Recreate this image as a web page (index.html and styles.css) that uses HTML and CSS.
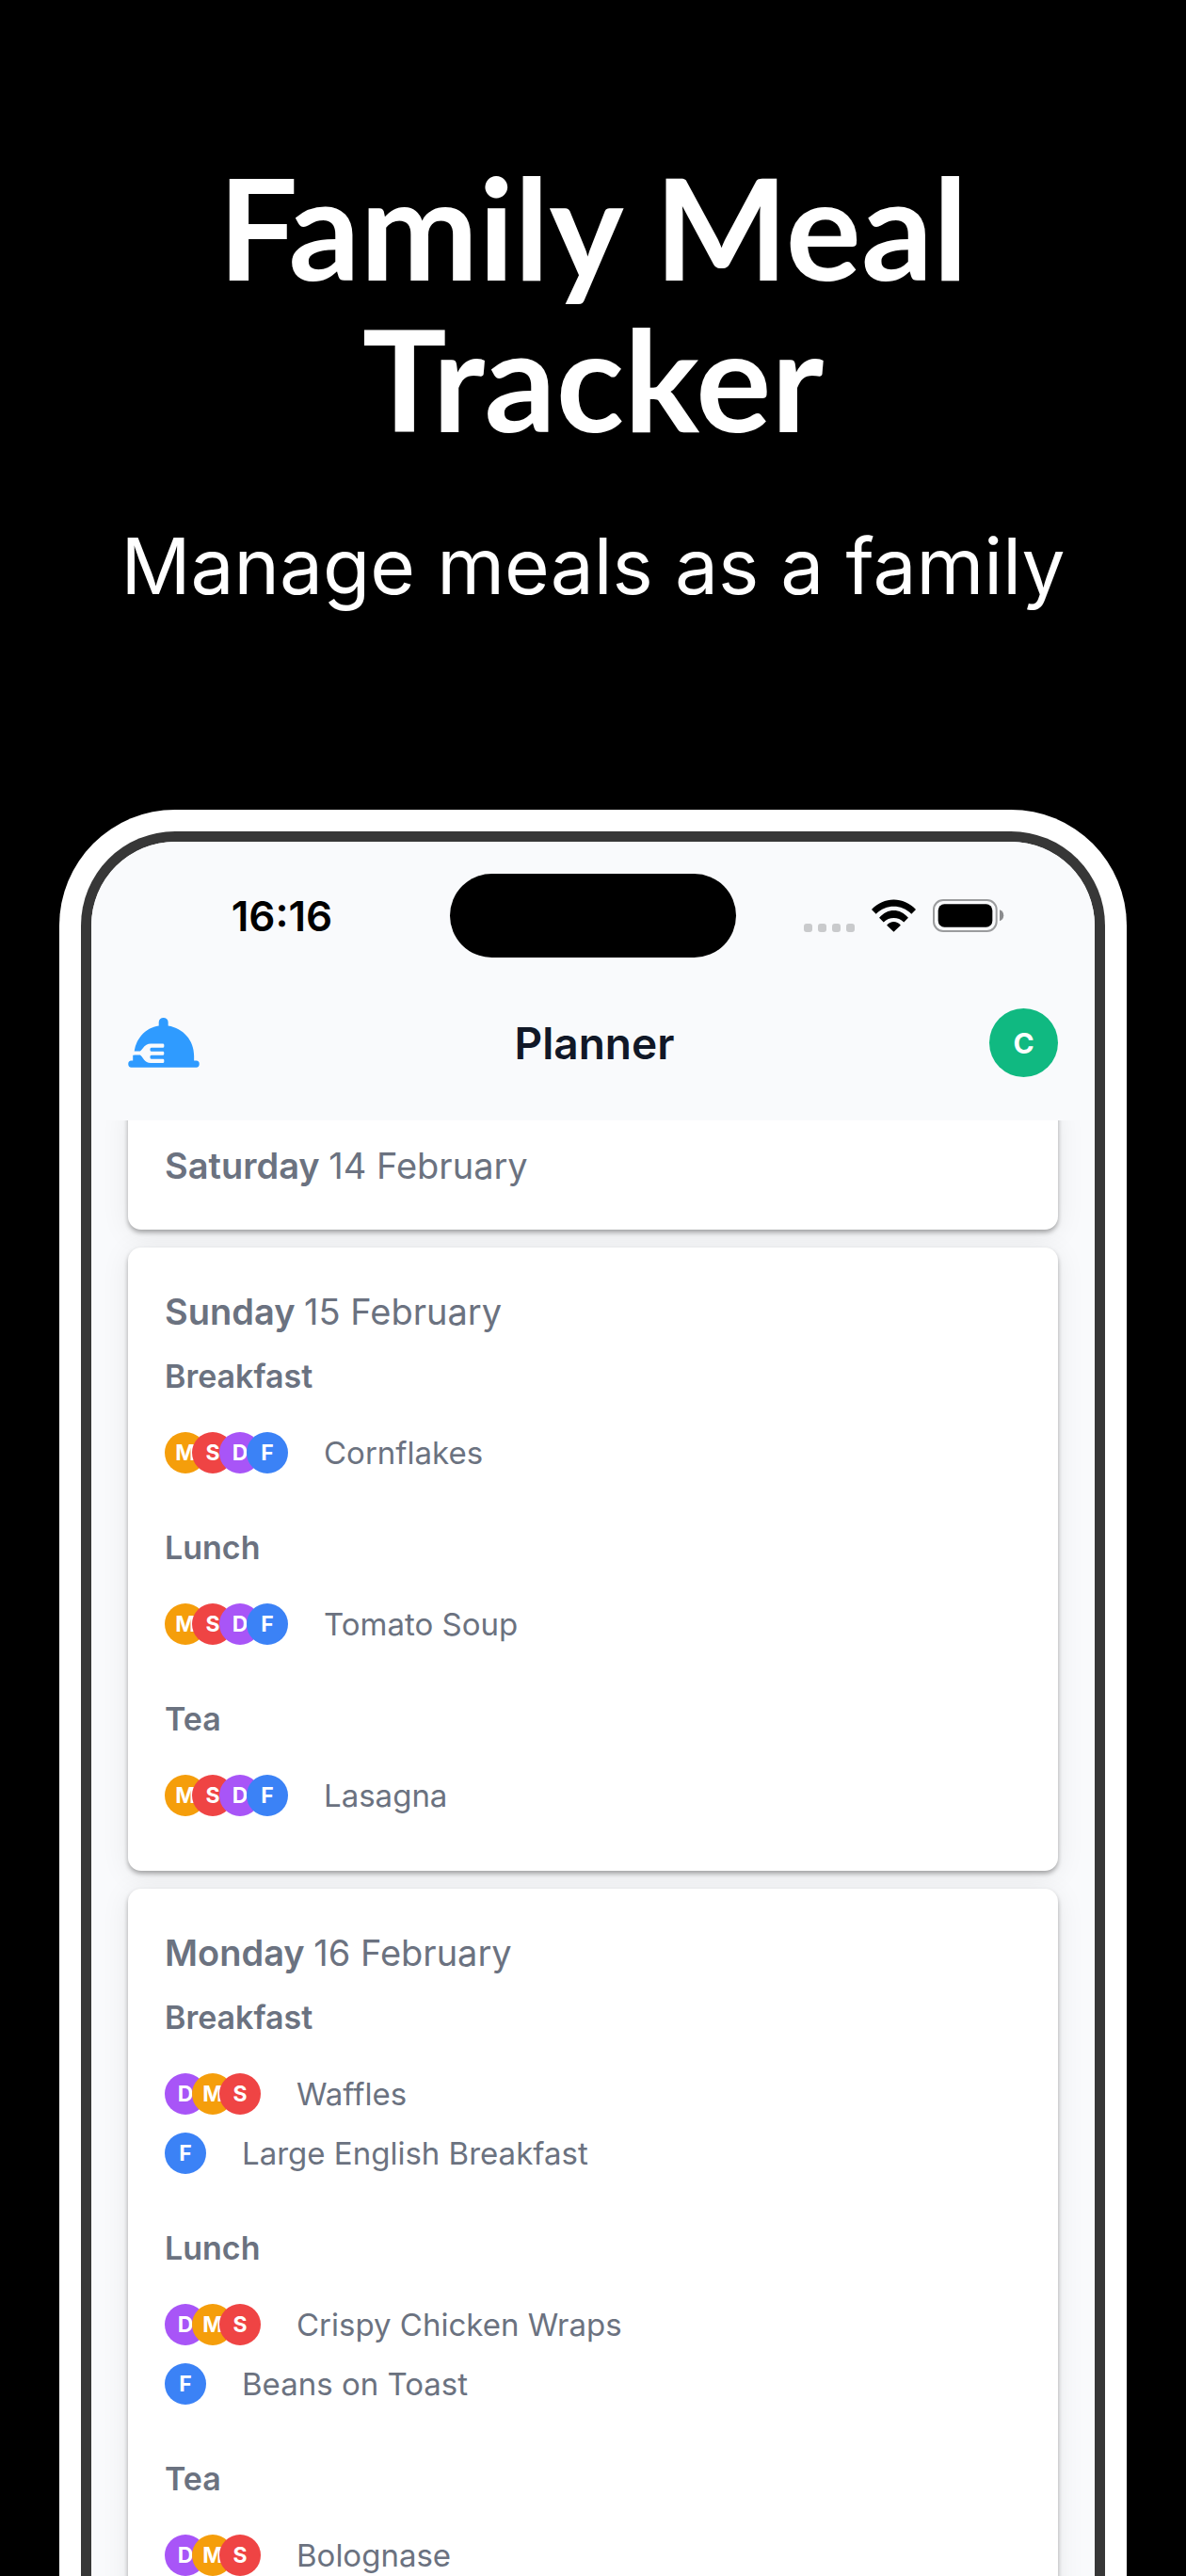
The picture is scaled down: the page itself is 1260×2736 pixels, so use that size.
FILE: index.html
```html
<!DOCTYPE html>
<html lang="en">
<head>
    <meta charset="UTF-8">
    <meta name="viewport" content="width=device-width, initial-scale=1.0">
    <title>Family Meal Tracker</title>
    <link rel="stylesheet" href="styles.css">
</head>
<body>
    <section class="intro">
        <h1>Family Meal Tracker</h1>
        <p>Manage meals as a family</p>
    </section>

    <div class="phone">
        <div class="screen">
            <div class="top">
                <div class="status-bar">
                    <div class="status-left">16:16</div>
                    <div class="island"></div>
                    <div class="status-right">
                        <div class="signal"><i></i><i></i><i></i><i></i></div>
                        <svg class="wifi" viewBox="314 345 140 103">
                            <path d="M314 377C352 335 416 335 454 377L440 391C408 360 360 360 328 391Z"/>
                            <path d="M338 403C364 372 404 372 430 403L416 417C398 400 370 400 352 417Z"/>
                            <path d="M362 427C374 412 394 412 406 427L384 448Z"/>
                        </svg>
                        <svg class="battery" viewBox="508 345 228 105">
                            <rect x="511" y="348" width="200" height="99" rx="30" fill="none" stroke="#9b9c9e" stroke-width="6"/>
                            <rect x="525" y="361" width="173" height="73" rx="20"/>
                            <path d="M721 379C738 384 738 410 721 415Z" fill="#8b8c8e"/>
                        </svg>
                    </div>
                </div>
                <header class="header">
                    <a href="#" class="logo" aria-label="Home">
                        <svg viewBox="290 720 228 160">
                            <path fill="#2f9bff" d="M388 746V734A15 14 0 0 1 418 734V746C466 754 501 792 501 842V857H508A10 11 0 0 1 508 879H300A10 11 0 0 1 300 857H305V839H309C310 790 345 752 388 746Z"/>
                            <path class="fork" d="M304 827H328C338 820 342 803 362 803H402A3 6 0 0 1 402 816H364A4 6 0 0 0 364 828H402A3 6 0 0 1 402 840H364A4 6 0 0 0 364 852H402A3 6 0 0 1 402 865H362C342 865 338 846 328 839H304Z"/>
                        </svg>
                    </a>
                    <h2>Planner</h2>
                    <button class="profile" type="button">C</button>
                </header>
            </div>

            <main class="days">
                <article class="day">
                    <h3>Saturday <span>14 February</span></h3>
                </article>

                <article class="day">
                    <h3>Sunday <span>15 February</span></h3>
                    <section class="meal">
                        <h4>Breakfast</h4>
                        <div class="dish">
                            <div class="people"><b class="m">M</b><b class="s">S</b><b class="d">D</b><b class="f">F</b></div>
                            <span>Cornflakes</span>
                        </div>
                    </section>
                    <section class="meal">
                        <h4>Lunch</h4>
                        <div class="dish">
                            <div class="people"><b class="m">M</b><b class="s">S</b><b class="d">D</b><b class="f">F</b></div>
                            <span>Tomato Soup</span>
                        </div>
                    </section>
                    <section class="meal">
                        <h4>Tea</h4>
                        <div class="dish">
                            <div class="people"><b class="m">M</b><b class="s">S</b><b class="d">D</b><b class="f">F</b></div>
                            <span>Lasagna</span>
                        </div>
                    </section>
                </article>

                <article class="day">
                    <h3>Monday <span>16 February</span></h3>
                    <section class="meal">
                        <h4>Breakfast</h4>
                        <div class="dish">
                            <div class="people"><b class="d">D</b><b class="m">M</b><b class="s">S</b></div>
                            <span>Waffles</span>
                        </div>
                        <div class="dish">
                            <div class="people"><b class="f">F</b></div>
                            <span>Large English Breakfast</span>
                        </div>
                    </section>
                    <section class="meal">
                        <h4>Lunch</h4>
                        <div class="dish">
                            <div class="people"><b class="d">D</b><b class="m">M</b><b class="s">S</b></div>
                            <span>Crispy Chicken Wraps</span>
                        </div>
                        <div class="dish">
                            <div class="people"><b class="f">F</b></div>
                            <span>Beans on Toast</span>
                        </div>
                    </section>
                    <section class="meal">
                        <h4>Tea</h4>
                        <div class="dish">
                            <div class="people"><b class="d">D</b><b class="m">M</b><b class="s">S</b></div>
                            <span>Bolognase</span>
                        </div>
                    </section>
                </article>
            </main>
        </div>
    </div>
</body>
</html>
```

FILE: styles.css
```css
* {
  box-sizing: border-box;
}

body {
  margin: 0;
  height: 100vh;
  overflow: hidden;
  display: flex;
  flex-direction: column;
  background-color: #000;
  font-family: Inter, "Liberation Sans", sans-serif;
}

h1, h2, h3, h4, p {
  margin: 0;
}

/* intro */

.intro {
  padding: 160px 60px 0;
  color: #fff;
  text-align: center;
  height: 860px;
  flex-shrink: 0;
}

.intro h1 {
  max-width: 960px;
  margin: 0 auto;
  font-family: Lato, "Open Sans", sans-serif;
  font-size: 150px;
  font-weight: 700;
  line-height: 161px;
}

.intro p {
  margin-top: 70px;
  font-size: 82px;
  line-height: 100px;
}

/* phone */

.phone {
  flex: 1;
  min-height: 0;
  margin: 0 5%;
  padding: 23px 23px 0;
  border-radius: 123px 123px 0 0;
  background-color: #fff;
}

.screen {
  height: 100%;
  overflow: hidden;
  border: 11px solid #373737;
  border-bottom: 0;
  border-radius: 100px 100px 0 0;
  background-color: #f9fafc;
}

.top {
  position: relative;
  z-index: 2;
  background-color: #f9fafc;
}

.status-bar {
  display: grid;
  grid-template-columns: 1fr 304px 1fr;
  align-items: center;
  padding: 34px 0 8px;
}

.status-left {
  padding-left: 24px;
  font-size: 44px;
  font-weight: 600;
  text-align: center;
}

.island {
  height: 89px;
  border-radius: 45px;
  background-color: #000;
}

.status-right {
  display: flex;
  align-items: flex-end;
  justify-content: center;
  gap: 18px;
  padding-right: 24px;
}

.status-right svg {
  display: block;
}

.signal {
  display: flex;
  gap: 6px;
}

.signal i {
  width: 9px;
  height: 9px;
  border-radius: 3px;
  background-color: #c9cacc;
}

.wifi {
  width: 47px;
  height: 35px;
}

.battery {
  width: 76px;
  height: 35px;
}

.header {
  display: flex;
  align-items: center;
  justify-content: space-between;
  height: 165px;
  padding: 0 39px;
}

.logo svg {
  display: block;
  width: 76px;
  height: 53px;
}

.fork {
  fill: #f9fafc;
}

.header h2 {
  color: #111827;
  font-size: 46px;
  font-weight: 600;
}

.profile {
  width: 73px;
  height: 73px;
  padding: 0;
  border: 0;
  border-radius: 50%;
  background-color: #10b981;
  color: #fff;
  font-family: inherit;
  font-size: 30px;
  font-weight: 700;
}

/* days */

.days {
  display: flex;
  flex-direction: column;
  gap: 19px;
  margin-top: -20px;
  padding: 0 39px;
}

.day {
  padding: 39px;
  border-radius: 14px;
  background-color: #fff;
  box-shadow: 0 3px 5px rgba(0, 0, 0, .32), 0 4px 30px rgba(0, 0, 0, .08);
  color: #6b7280;
}

.day h3 {
  font-size: 38px;
  font-weight: 600;
  line-height: 58px;
}

.day h3 span {
  font-weight: 400;
}

.meal {
  margin-bottom: 30px;
  padding-top: 11px;
}

.meal:last-child {
  margin-bottom: 10px;
}

.meal h4 {
  margin-bottom: 20px;
  font-size: 34px;
  font-weight: 600;
  line-height: 58px;
}

.dish {
  display: flex;
  align-items: center;
  gap: 38px;
  height: 63px;
  font-size: 33px;
}

/* people */

.people {
  display: flex;
}

.people b {
  width: 44px;
  height: 44px;
  border-radius: 50%;
  color: #fff;
  font-size: 23px;
  font-weight: 700;
  line-height: 44px;
  text-align: center;
}

.people b + b {
  margin-left: -15px;
}

.m {
  background-color: #f59e0b;
}

.s {
  background-color: #ef4444;
}

.d {
  background-color: #a855f7;
}

.f {
  background-color: #3b82f6;
}
```
